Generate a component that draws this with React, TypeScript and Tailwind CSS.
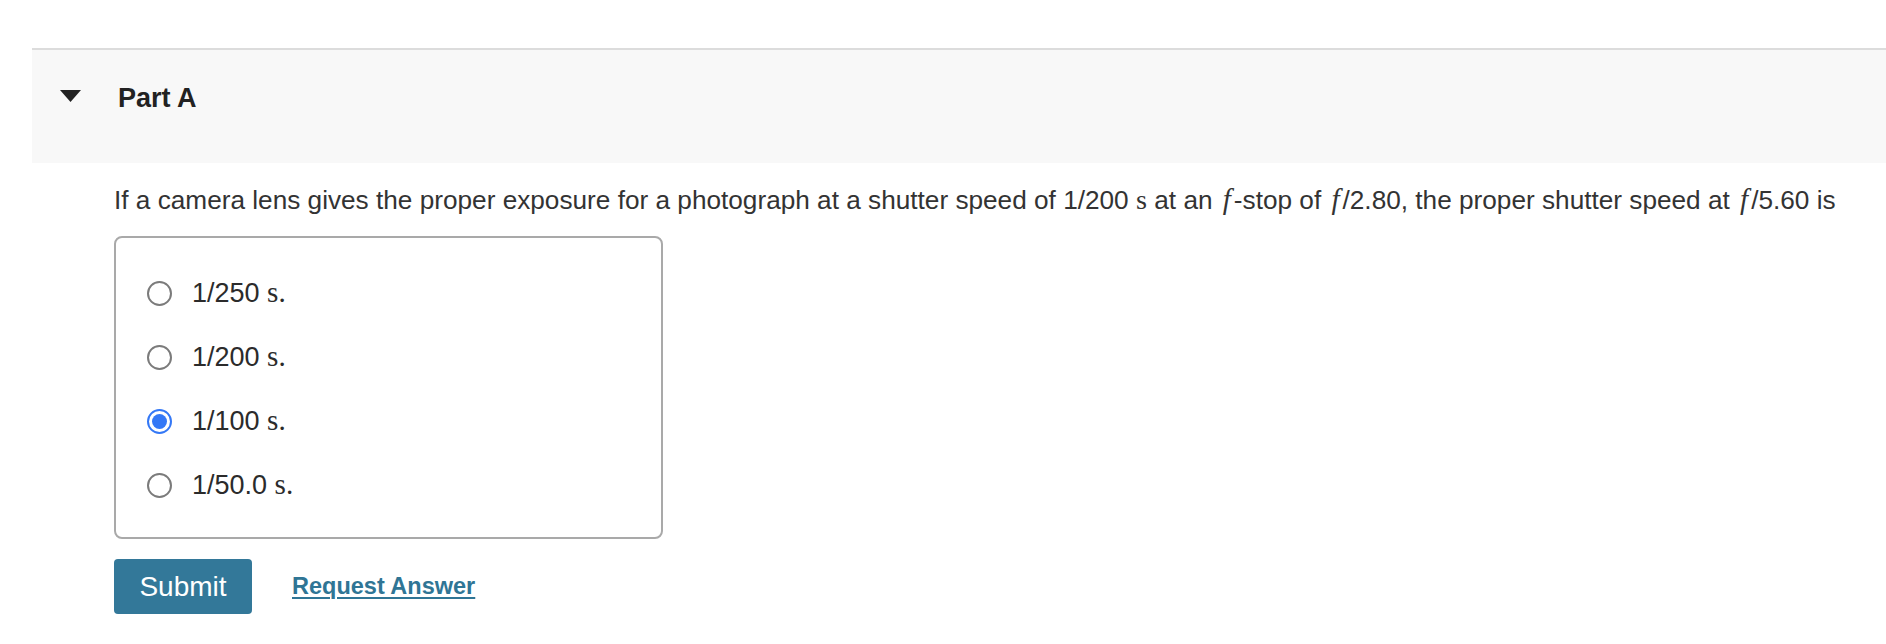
import React from "react";

const F = () => (
  <span
    className="italic text-[29px] mx-[3px]"
    style={{ fontFamily: '"Liberation Serif", "DejaVu Serif", serif' }}
  >
    f
  </span>
);

const Serif = ({ children }: { children: React.ReactNode }) => (
  <span className="text-[1.08em]" style={{ fontFamily: '"Liberation Serif", "DejaVu Serif", serif' }}>{children}</span>
);

const Radio = ({ checked }: { checked?: boolean }) =>
  checked ? (
    <span className="w-[25px] h-[25px] rounded-full border-2 border-[#3478f6] flex items-center justify-center bg-white">
      <span className="w-[15px] h-[15px] rounded-full bg-[#3478f6]" />
    </span>
  ) : (
    <span className="w-[25px] h-[25px] rounded-full border-2 border-[#7b7b7b] bg-white" />
  );

export default function App() {
  const options = [
    { num: "1/250", checked: false },
    { num: "1/200", checked: false },
    { num: "1/100", checked: true },
    { num: "1/50.0", checked: false },
  ];
  return (
    <div
      className="w-[1886px] h-[644px] bg-white text-[#333] pt-[48px]"
      style={{ fontFamily: '"Liberation Sans", Arial, sans-serif' }}
    >
      <div className="ml-[32px] border-t-2 border-[#dcdcdc] bg-[#f8f8f8] h-[115px] flex items-start pt-[39px]">
        <svg width="21" height="12" viewBox="0 0 21 12" className="ml-[28px] mt-[1px]">
          <polygon points="0,0 21,0 10.5,12" fill="#222" />
        </svg>
        <div className="ml-[37px] -mt-[7px] text-[27px] font-bold text-[#222] leading-[32px]">Part A</div>
      </div>

      <div className="pl-[114px]">
        <p className="mt-[19px] text-[26.2px] leading-[34px] whitespace-nowrap">
          If a camera lens gives the proper exposure for a photograph at a shutter speed of 1/200{" "}
          <Serif>s</Serif> at an <F />-stop of <F />/2.80, the proper shutter speed at <F />/5.60 is
        </p>

        <div className="mt-[19px] w-[549px] h-[303px] border-2 border-[#a9a9a9] rounded-[8px] pt-[23px] pl-[31px]">
          {options.map((o) => (
            <div key={o.num} className="h-[64px] flex items-center">
              <Radio checked={o.checked} />
              <span className="ml-[20px] text-[27px] text-[#2b2b2b]">
                {o.num} <Serif>s.</Serif>
              </span>
            </div>
          ))}
        </div>

        <div className="mt-[20px] flex items-center">
          <button className="w-[138px] h-[55px] rounded-[4px] bg-[#337899] text-white text-[28px] flex items-center justify-center">
            Submit
          </button>
          <a href="#" className="ml-[40px] text-[23.5px] font-bold text-[#2f7595] underline underline-offset-[3px] decoration-2">
            Request Answer
          </a>
        </div>
      </div>
    </div>
  );
}
